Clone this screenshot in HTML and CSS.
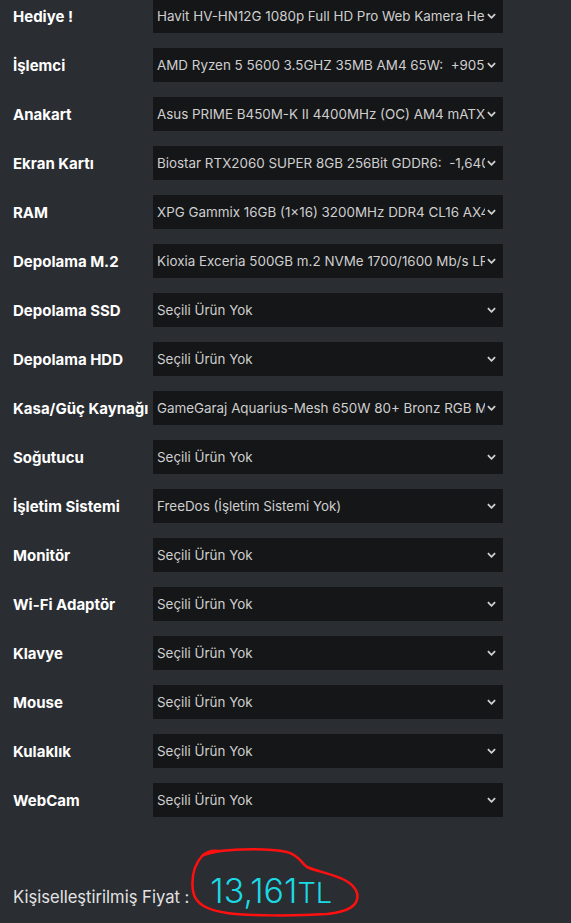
FILE: index.html
```html
<!DOCTYPE html>
<html lang="tr">
<head>
<meta charset="utf-8">
<title>Sistem Toplama</title>
<link rel="stylesheet" href="styles.css">
</head>
<body>
<div class="form">
  <div class="row"><label class="lbl">Hediye !</label><div class="sel"><span class="val">Havit HV-HN12G 1080p Full HD Pro Web Kamera Headset</span><svg class="chev" viewBox="0 0 10 6"><path d="M1 1 L5 5 L9 1"/></svg></div></div>
  <div class="row"><label class="lbl">İşlemci</label><div class="sel"><span class="val">AMD Ryzen 5 5600 3.5GHZ 35MB AM4 65W:&nbsp; +905 TL</span><svg class="chev" viewBox="0 0 10 6"><path d="M1 1 L5 5 L9 1"/></svg></div></div>
  <div class="row"><label class="lbl">Anakart</label><div class="sel"><span class="val">Asus PRIME B450M-K II 4400MHz (OC) AM4 mATX:&nbsp; +0 TL</span><svg class="chev" viewBox="0 0 10 6"><path d="M1 1 L5 5 L9 1"/></svg></div></div>
  <div class="row"><label class="lbl">Ekran Kartı</label><div class="sel"><span class="val">Biostar RTX2060 SUPER 8GB 256Bit GDDR6:&nbsp; -1,640 TL</span><svg class="chev" viewBox="0 0 10 6"><path d="M1 1 L5 5 L9 1"/></svg></div></div>
  <div class="row"><label class="lbl">RAM</label><div class="sel"><span class="val">XPG Gammix 16GB (1x16) 3200MHz DDR4 CL16 AX4U</span><svg class="chev" viewBox="0 0 10 6"><path d="M1 1 L5 5 L9 1"/></svg></div></div>
  <div class="row"><label class="lbl">Depolama M.2</label><div class="sel"><span class="val">Kioxia Exceria 500GB m.2 NVMe 1700/1600 Mb/s LRC</span><svg class="chev" viewBox="0 0 10 6"><path d="M1 1 L5 5 L9 1"/></svg></div></div>
  <div class="row"><label class="lbl">Depolama SSD</label><div class="sel"><span class="val">Seçili Ürün Yok</span><svg class="chev" viewBox="0 0 10 6"><path d="M1 1 L5 5 L9 1"/></svg></div></div>
  <div class="row"><label class="lbl">Depolama HDD</label><div class="sel"><span class="val">Seçili Ürün Yok</span><svg class="chev" viewBox="0 0 10 6"><path d="M1 1 L5 5 L9 1"/></svg></div></div>
  <div class="row"><label class="lbl">Kasa/Güç Kaynağı</label><div class="sel"><span class="val">GameGaraj Aquarius-Mesh 650W 80+ Bronz RGB Mid</span><svg class="chev" viewBox="0 0 10 6"><path d="M1 1 L5 5 L9 1"/></svg></div></div>
  <div class="row"><label class="lbl">Soğutucu</label><div class="sel"><span class="val">Seçili Ürün Yok</span><svg class="chev" viewBox="0 0 10 6"><path d="M1 1 L5 5 L9 1"/></svg></div></div>
  <div class="row"><label class="lbl">İşletim Sistemi</label><div class="sel"><span class="val">FreeDos (İşletim Sistemi Yok)</span><svg class="chev" viewBox="0 0 10 6"><path d="M1 1 L5 5 L9 1"/></svg></div></div>
  <div class="row"><label class="lbl">Monitör</label><div class="sel"><span class="val">Seçili Ürün Yok</span><svg class="chev" viewBox="0 0 10 6"><path d="M1 1 L5 5 L9 1"/></svg></div></div>
  <div class="row"><label class="lbl">Wi-Fi Adaptör</label><div class="sel"><span class="val">Seçili Ürün Yok</span><svg class="chev" viewBox="0 0 10 6"><path d="M1 1 L5 5 L9 1"/></svg></div></div>
  <div class="row"><label class="lbl">Klavye</label><div class="sel"><span class="val">Seçili Ürün Yok</span><svg class="chev" viewBox="0 0 10 6"><path d="M1 1 L5 5 L9 1"/></svg></div></div>
  <div class="row"><label class="lbl">Mouse</label><div class="sel"><span class="val">Seçili Ürün Yok</span><svg class="chev" viewBox="0 0 10 6"><path d="M1 1 L5 5 L9 1"/></svg></div></div>
  <div class="row"><label class="lbl">Kulaklık</label><div class="sel"><span class="val">Seçili Ürün Yok</span><svg class="chev" viewBox="0 0 10 6"><path d="M1 1 L5 5 L9 1"/></svg></div></div>
  <div class="row"><label class="lbl">WebCam</label><div class="sel"><span class="val">Seçili Ürün Yok</span><svg class="chev" viewBox="0 0 10 6"><path d="M1 1 L5 5 L9 1"/></svg></div></div>
</div>
<div class="price">
  <span class="plabel">Kişiselleştirilmiş Fiyat :</span>
  <span class="amount"><span class="num">13,161</span><span class="cur">TL</span>
    <svg class="circle" viewBox="0 0 175 75" width="175" height="75"><path d="M15 10 C30 2, 80 2, 100 6 C112 9, 115 18, 120 21 C135 28, 165 30, 170 47 C173 60, 160 66, 140 68 C110 70, 60 70, 40 67 C20 64, 8 58, 6 45 C4 30, 8 18, 15 10 C20 5, 26 4, 32 5"/></svg>
  </span>
</div>
</body>
</html>
```

FILE: styles.css
```css
html, body {
  margin: 0;
  padding: 0;
  background: #2a2d32;
  height: 100%;
  overflow: hidden;
}
body {
  font-family: Inter, "Noto Sans", "DejaVu Sans", sans-serif;
  padding-left: 13px;
}
.form {
  margin-top: -1px;
  display: flex;
  flex-direction: column;
  gap: 15px;
}
.row {
  display: flex;
  align-items: center;
  height: 34px;
}
.lbl {
  width: 140px;
  flex: none;
  color: #ffffff;
  font-weight: 700;
  font-size: 15px;
  white-space: nowrap;
}
.sel {
  position: relative;
  width: 350px;
  height: 34px;
  background: #151618;
  display: flex;
  align-items: center;
  padding: 0 18px 0 4px;
  box-sizing: border-box;
}
.val {
  color: #cfcfcf;
  font-size: 13.4px;
  white-space: nowrap;
  overflow: hidden;
  flex: 1;
}
.chev {
  position: absolute;
  right: 7px;
  top: 14px;
  width: 9px;
  height: 6px;
  fill: none;
  stroke: #d0d0d0;
  stroke-width: 2;
}
.price {
  margin-top: 53px;
  display: flex;
  align-items: baseline;
  gap: 21px;
}
.plabel {
  color: #e2e2e2;
  font-size: 16.6px;
}
.amount {
  position: relative;
  color: #1bd9e3;
  font-weight: 300;
}
.num {
  font-size: 34px;
}
.cur {
  font-size: 29px;
}
.circle {
  position: absolute;
  left: -23px;
  top: -24px;
  fill: none;
  stroke: #ff1010;
  stroke-width: 2.5;
  stroke-linecap: round;
}
```
